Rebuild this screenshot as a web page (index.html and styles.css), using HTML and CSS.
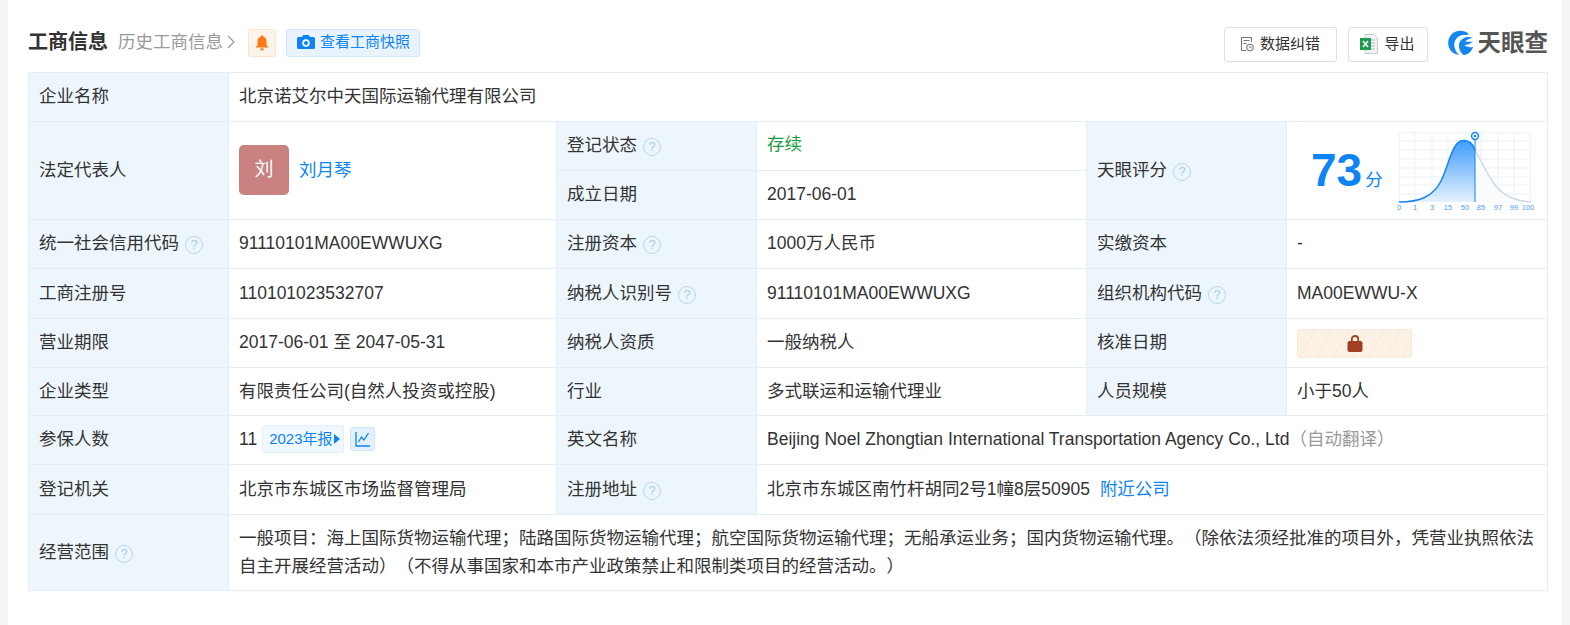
FILE: index.html
```html
<!DOCTYPE html>
<html lang="zh">
<head>
<meta charset="utf-8">
<title>工商信息</title>
<link rel="stylesheet" href="styles.css">
</head>
<body>
<main class="panel">
  <header class="head">
    <h2 class="title">工商信息</h2>
    <a class="history">历史工商信息<svg class="chev" viewBox="0 0 8 14" width="8" height="14"><path d="M1 1l6 6-6 6" fill="none" stroke="#999" stroke-width="1.2"/></svg></a>
    <span class="bell"><svg viewBox="0 0 14 16" width="14" height="16"><path d="M7 0.5c.8 0 1.2.5 1.3 1.1C10.500 2.200 11.500 4 11.500 6.500V10l2 2.500H.5l2-2.500V6.500C2.500 4 3.500 2.200 5.700 1.600 5.800 1 6.200.5 7 .5z" fill="#ff7a14"/><path d="M5 13.500h4a2 2 0 0 1-4 0z" fill="#ff7a14"/></svg></span>
    <a class="snap"><svg viewBox="0 0 18 16" width="18" height="16"><path d="M1.500 3H5l1.200-2h5.600L13 3h3.500A1.500 1.500 0 0 1 18 4.500v9a1.500 1.500 0 0 1-1.500 1.500h-15A1.500 1.500 0 0 1 0 13.500v-9A1.500 1.500 0 0 1 1.500 3z" fill="#0d84f5"/><circle cx="9" cy="9" r="3.800" fill="#fff"/><circle cx="9" cy="9" r="2" fill="#0d84f5"/></svg>查看工商快照</a>
    <div class="tools">
      <a class="btn btn-fix"><svg viewBox="0 0 14 16" width="14" height="16"><path d="M11.500 6V1.500h-10v13H6" fill="none" stroke="#777" stroke-width="1.100"/><path d="M3.500 4.500h6M3.500 7.500h3" stroke="#777" stroke-width="1"/><circle cx="10" cy="11.500" r="3.200" fill="none" stroke="#777" stroke-width="1.100"/><path d="M10 9.800v2h1.400" fill="none" stroke="#777"/></svg>数据纠错</a>
      <a class="btn btn-out"><svg viewBox="0 0 18 20" width="18" height="20"><path d="M5 .5h9l3.500 3.500v15.500H5z" fill="#f0f2f5" stroke="#c5cad0"/><path d="M11 6h4M11 9h4M11 12h4M11 15h4" stroke="#b9bec4"/><rect y="4" width="11" height="12" fill="#1e9c50"/><path d="M3 7l5 6M8 7l-5 6" stroke="#fff" stroke-width="1.500"/></svg>导出</a>
      <div class="logo"><svg viewBox="0 0 24 24" width="25" height="25"><path d="M20 3.500C14.500-1 4.500-.5 1 8c-3 8 2.500 15.500 9.500 16C7 20.500 5 15.500 6.500 11c1.500-4 5-6.500 9-6.300 1.500.1 3 .3 4.500-1.200z" fill="#1486f0"/><path d="M24 7.500C19 5.500 13 7.500 11 12c-1.500 4.500.5 9.500 4 12 4.500-.3 7.800-3.500 9-8-3 1-6 .6-8.200-1.500 2.500-.2 5.700-1.200 8.200-3.500-2.500.5-5 .5-7.500 0 2.200-1.800 4.800-3 7.500-3.500z" fill="#1486f0"/></svg><span class="logo-text">天眼查</span></div>
    </div>
  </header>

  <table class="info">
    <colgroup>
      <col class="c-label"><col class="c-a"><col class="c-label"><col class="c-b"><col class="c-label"><col class="c-c">
    </colgroup>
    <tr class="r49">
      <th>企业名称</th>
      <td colspan="5">北京诺艾尔中天国际运输代理有限公司</td>
    </tr>
    <tr class="r49">
      <th rowspan="2">法定代表人</th>
      <td rowspan="2">
        <div class="person"><span class="avatar">刘</span><a class="link">刘月琴</a></div>
      </td>
      <th>登记状态<i class="help">?</i></th>
      <td class="ok"><span>存续</span></td>
      <th rowspan="2">天眼评分<i class="help">?</i></th>
      <td rowspan="2" class="score-cell">
        <div class="score">
          <div class="score-num"><b>73</b><span>分</span></div>
          <svg class="chart" viewBox="0 0 138 80" width="138" height="80">
            <defs>
              <linearGradient id="fillg" x1="0" y1="0" x2="0" y2="1"><stop offset="0" stop-color="#3f9cfb"/><stop offset="1" stop-color="#e6f2fe"/></linearGradient>
            </defs>
            <g stroke="#f1f5fa" stroke-width="1.500">
              <path d="M2 1.500H134M2 10H134M2 19H134M2 28H134M2 37H134M2 46H134M2 54H134M2 63H134"/>
              <path d="M2.500 1V71M18 1V71M35 1V71M51 1V71M68 1V71M84 1V71M101 1V71M117 1V71M133.500 1V71"/>
            </g>
            <path d="M78 19C90 40 96 60 115 67C122 70 128 70.500 134 71H78z" fill="#fafbfd"/>
            <path d="M2 71C22 71 36 66 44 50C52 34 55 10 66 9.500C72 9 76 13 78 19V71z" fill="url(#fillg)"/>
            <path d="M78 19C90 40 96 60 115 67C122 70 128 70.500 134 71" fill="none" stroke="#ccd9e6" stroke-width="1.500"/>
            <path d="M2 71C22 71 36 66 44 50C52 34 55 10 66 9.500C72 9 76 13 78 19" fill="none" stroke="#1284f0" stroke-width="1.500"/>
            <path d="M78 8V71" stroke="#1284f0" stroke-width="1"/>
            <circle cx="78" cy="5" r="3.400" fill="#fff" stroke="#1284f0" stroke-width="1.500"/>
            <circle cx="78" cy="5" r="1.300" fill="#1284f0"/>
            <g class="ticks" text-anchor="middle">
              <text x="2" y="79">0</text><text x="18" y="79">1</text><text x="35" y="79">3</text><text x="51" y="79">15</text><text x="68" y="79">50</text><text x="84" y="79">85</text><text x="101" y="79">97</text><text x="117" y="79">99</text><text x="131" y="79">100</text>
            </g>
          </svg>
        </div>
      </td>
    </tr>
    <tr class="r49">
      <th>成立日期</th>
      <td>2017-06-01</td>
    </tr>
    <tr class="r49">
      <th>统一社会信用代码<i class="help">?</i></th>
      <td>91110101MA00EWWUXG</td>
      <th>注册资本<i class="help">?</i></th>
      <td>1000万人民币</td>
      <th>实缴资本</th>
      <td>-</td>
    </tr>
    <tr class="r50">
      <th>工商注册号</th>
      <td>110101023532707</td>
      <th>纳税人识别号<i class="help">?</i></th>
      <td>91110101MA00EWWUXG</td>
      <th>组织机构代码<i class="help">?</i></th>
      <td>MA00EWWU-X</td>
    </tr>
    <tr class="r49">
      <th>营业期限</th>
      <td>2017-06-01 至 2047-05-31</td>
      <th>纳税人资质</th>
      <td>一般纳税人</td>
      <th>核准日期</th>
      <td><span class="locked"><svg viewBox="0 0 16 17" width="16" height="17"><path d="M4.800 7V4.200a3.200 3.200 0 0 1 6.400 0V7" fill="none" stroke="#a23f22" stroke-width="1.800"/><rect x=".5" y="6" width="15" height="11" rx="2" fill="#a23f22"/></svg></span></td>
    </tr>
    <tr class="r48">
      <th>企业类型</th>
      <td>有限责任公司(自然人投资或控股)</td>
      <th>行业</th>
      <td>多式联运和运输代理业</td>
      <th>人员规模</th>
      <td>小于50人</td>
    </tr>
    <tr class="r49">
      <th>参保人数</th>
      <td>
        <div class="insured">11<a class="year">2023年报<svg viewBox="0 0 6 10" width="6" height="10"><path d="M0 0l6 5-6 5z" fill="#0d84f5"/></svg></a><span class="trend"><svg viewBox="0 0 16 16" width="16" height="16"><path d="M1 1v14h14" fill="none" stroke="#0d84f5" stroke-width="1.300"/><path d="M3.500 11l3-5 2.500 3L13.500 2" fill="none" stroke="#0d84f5" stroke-width="1.300"/></svg></span></div>
      </td>
      <th>英文名称</th>
      <td colspan="3">Beijing Noel Zhongtian International Transportation Agency Co., Ltd<span class="auto">（自动翻译）</span></td>
    </tr>
    <tr class="r50">
      <th>登记机关</th>
      <td>北京市东城区市场监督管理局</td>
      <th>注册地址<i class="help">?</i></th>
      <td colspan="3">北京市东城区南竹杆胡同2号1幢8层50905<a class="link near">附近公司</a></td>
    </tr>
    <tr class="r76">
      <th>经营范围<i class="help">?</i></th>
      <td colspan="5" class="scope">一般项目：海上国际货物运输代理；陆路国际货物运输代理；航空国际货物运输代理；无船承运业务；国内货物运输代理。（除依法须经批准的项目外，凭营业执照依法自主开展经营活动）（不得从事国家和本市产业政策禁止和限制类项目的经营活动。）</td>
    </tr>
  </table>
</main>
</body>
</html>
```

FILE: styles.css
```css
* { box-sizing: border-box; }
html, body { margin: 0; height: 100%; }
body {
  background: #f5f5f5;
  padding: 0 8px;
  font-family: "Liberation Sans", "Noto Sans CJK SC", sans-serif;
  font-size: 17.5px;
  line-height: 24px;
  color: #333;
  overflow: hidden;
  text-spacing-trim: space-all;
}
.panel { background: #fff; height: 100%; padding: 0 14px 0 20px; }

.head { display: flex; align-items: center; height: 72px; padding-top: 13px; }
.title { margin: 0 0 2px; font-size: 20px; font-weight: 700; color: #333; width: 90px; line-height: 28px; }
.history { color: #999; display: flex; align-items: center; gap: 4px; width: 130px; margin-bottom: 2px; }
.bell {
  width: 28px; height: 28px; display: flex; align-items: center; justify-content: center;
  background: #fff4ea; border: 1px solid #fde3cd; border-radius: 3px; margin-right: 10px;
}
.snap {
  height: 28px; width: 134px; display: flex; align-items: center; gap: 5px; padding: 0 0 2px 10px;
  background: #e8f3ff; border: 1px solid #cfe5fd; border-radius: 3px; color: #0d84f5; font-size: 15px;
}
.tools { margin-left: auto; display: flex; align-items: center; gap: 11px; margin-top: 4px; }
.btn {
  height: 35px; display: flex; align-items: center; justify-content: center; gap: 6px; padding-bottom: 1px;
  background: #fff; border: 1px solid #dcdfe3; border-radius: 3px; font-size: 15px; color: #333;
}
.btn-fix { width: 113px; }
.btn-out { width: 80px; }
.logo { display: flex; align-items: center; gap: 5px; margin-left: 9px; margin-top: -4px; }
.logo-text { font-size: 23.5px; font-weight: 700; color: #555; line-height: 26px; }

.info { width: 1519px; border-collapse: collapse; table-layout: fixed; }
.c-label { width: 200px; }
.c-a { width: 328px; }
.c-b { width: 330px; }
.c-c { width: 261px; }
.info th, .info td { border: 1px solid #e6eef5; padding: 0 10px 2px; text-align: left; vertical-align: middle; }
.info th { background: #eef6fd; font-weight: 400; color: #333; }
.info td { background: #fff; }
.r48 { height: 48px; }
.r49 { height: 49px; }
.r50 { height: 50px; }
.r76 { height: 76px; }

.help {
  display: inline-block; width: 18px; height: 18px; margin-left: 6px; border: 1.5px solid #b5d6f0; border-radius: 50%;
  color: #a5cdee; font-size: 13px; font-style: normal; line-height: 15px; text-align: center; vertical-align: 0;
}
.link { color: #0d84f5; }
.near { margin-left: 10px; }
.ok { color: #1a9c45; }
.ok span { position: relative; top: -1px; }

.person { display: flex; align-items: center; gap: 10px; }
.avatar {
  width: 50px; height: 50px; border-radius: 5px; background: #c98280; color: #fff; font-size: 19px;
  display: flex; align-items: center; justify-content: center;
}

.score-cell.score-cell { padding: 0 0 2px; }
.score { display: flex; align-items: center; height: 80px; padding-left: 24px; }
.score-num { width: 86px; color: #0d84f5; display: flex; align-items: baseline; gap: 3px; }
.score-num b { font-size: 46px; line-height: 50px; }
.score-num span { font-size: 17.5px; }
.chart { display: block; margin-top: 3px; }
.ticks { font-size: 7.500px; fill: #4ea3f5; }

.locked {
  display: flex; align-items: center; justify-content: center; width: 115px; height: 29px; margin-top: 2px; border-radius: 3px;
  border: 1px solid #f8ead9;
  background: repeating-linear-gradient(120deg, #fbf1e5 0, #fbf1e5 14px, #f8e9da 14px, #f8e9da 15px);
}

.insured { display: flex; align-items: center; }
.year {
  display: flex; align-items: center; gap: 1px; height: 28px; margin-left: 5px; padding: 0 2px 0 6px; width: 82px;
  background: #f0f8ff; border: 1px solid #e1effc; border-radius: 3px; color: #0d84f5; font-size: 15px; white-space: nowrap;
}
.year svg { flex: none; }
.trend {
  display: flex; align-items: center; justify-content: center; width: 25px; height: 24px; margin-left: 6px;
  background: #e3f0fd; border: 1px solid #d2e6fb; border-radius: 3px;
}
.auto { color: #999; }
.scope { line-height: 28px; color: #333; }
```
